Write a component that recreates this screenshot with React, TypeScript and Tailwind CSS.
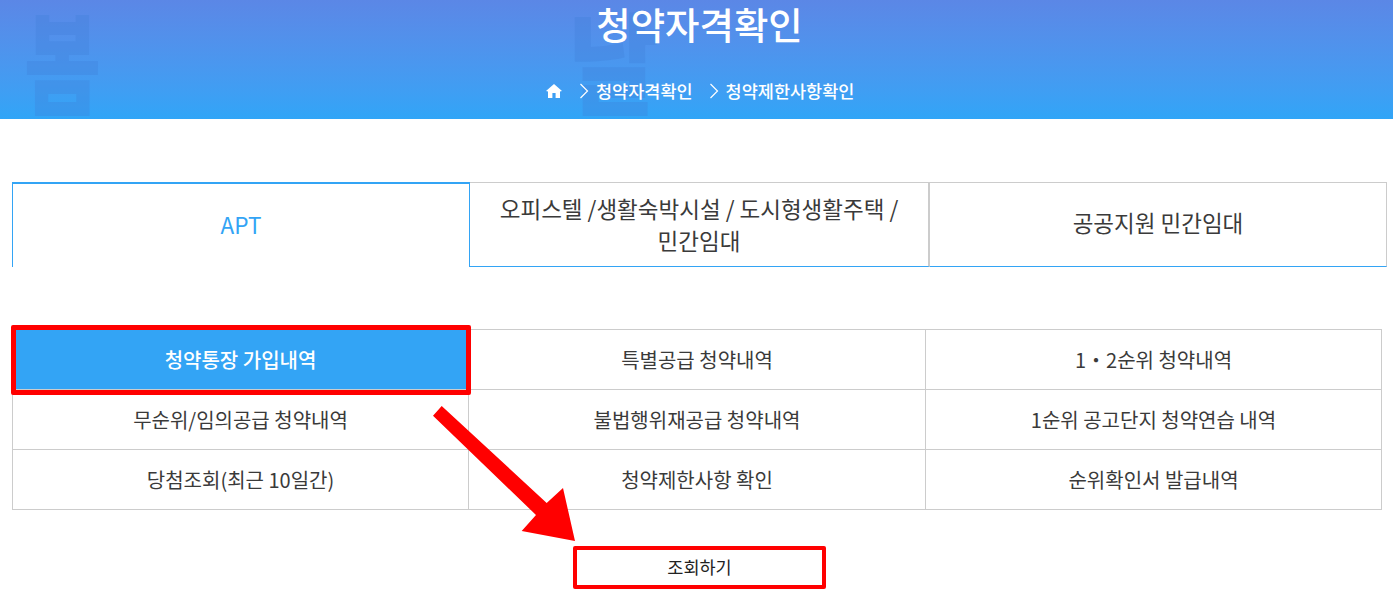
const rows = [
  ['청약통장 가입내역', '특별공급 청약내역', '1・2순위 청약내역'],
  ['무순위/임의공급 청약내역', '불법행위재공급 청약내역', '1순위 공고단지 청약연습 내역'],
  ['당첨조회(최근 10일간)', '청약제한사항 확인', '순위확인서 발급내역'],
];

function Home() {
  return (
    <svg width="16" height="14" viewBox="0 0 16 14" fill="white">
      <path d="M8 0 L16 7 L14 7.6 V14 H9.6 V9 H6.4 V14 H2 V7.6 L0 7 Z" />
    </svg>
  );
}

function Chevron() {
  return (
    <svg width="10" height="16" viewBox="0 0 10 16" fill="none" stroke="white" strokeWidth="1.2">
      <path d="M1.5 1 L8.5 8 L1.5 15" />
    </svg>
  );
}

export default function App() {
  return (
    <div className="relative h-[595px] overflow-hidden bg-white font-['Noto_Sans_CJK_KR','Noto_Sans',sans-serif] text-[#3a3a3a]">
      <header className="relative h-[119px] overflow-hidden bg-gradient-to-b from-[#5b87e6] to-[#30a5f7]">
        <span className="absolute left-[24px] top-[-22px] origin-left scale-x-[0.76] text-[110px] leading-[160px] font-black text-[#3f7fd8]/30">봄</span>
        <span className="absolute left-[568px] top-[-22px] origin-left scale-x-[0.9] text-[110px] leading-[160px] font-black text-[#3f7fd8]/30">날</span>
        <h1 className="relative pt-[1px] pl-[6px] text-center text-[37.4px] leading-[46px] font-medium text-white">청약자격확인</h1>
        <nav className="relative mt-[25px] flex h-[38px] items-center pl-[546px] text-[17.5px] font-medium text-white">
          <Home />
          <span className="ml-[17px] mr-[7px]"><Chevron /></span>
          <span>청약자격확인</span>
          <span className="ml-[16px] mr-[7px]"><Chevron /></span>
          <span>청약제한사항확인</span>
        </nav>
      </header>

      <div className="ml-[12px] mt-[63px] flex h-[85px] w-[1375px] text-[22.5px]">
        <div className="flex w-[458px] items-center justify-center border-x border-t-2 border-[#33a4f5] pb-[2px] text-[#33a4f5]">APT</div>
        <div className="flex w-[460px] items-center justify-center border-y border-r-2 border-t-[#ccc] border-r-[#ccc] border-b-[#33a4f5] px-[20px] pb-[2px] text-center leading-[32px]">
          오피스텔 /생활숙박시설 / 도시형생활주택 / 민간임대
        </div>
        <div className="flex w-[457px] items-center justify-center border-y border-r border-t-[#ccc] border-r-[#ccc] border-b-[#33a4f5] pb-[4px]">공공지원 민간임대</div>
      </div>

      <div className="relative ml-[12px] mt-[62px] grid w-[1370px] grid-cols-[456px_457px_456px] border-t border-l border-[#ccc] text-[20px]">
        {rows.flat().map((label, i) => (
          <div
            key={label}
            className={
              i === 0
                ? 'flex h-[60px] items-center justify-center border-r border-b border-[#ccc] bg-[#33a4f5] font-medium text-white'
                : 'flex h-[60px] items-center justify-center border-r border-b border-[#ccc]'
            }
          >
            {label}
          </div>
        ))}
        {/* 강조 표시 */}
        <div className="absolute left-[-2px] top-[-5px] h-[70px] w-[460px] rounded-[2px] border-[5px] border-[#ff0000]" />
      </div>

      <button className="ml-[573px] mt-[36px] flex h-[43px] w-[253px] items-center justify-center rounded-[2px] border-[4.5px] border-[#ff0000] text-[17.5px] text-[#222]">
        조회하기
      </button>

      <svg className="absolute left-0 top-0" width="1393" height="595" fill="#ff0000">
        <polygon points="441.7,406 433,415.7 536,515 521.7,531 575,541 563,488 546.7,503" />
      </svg>
    </div>
  );
}
